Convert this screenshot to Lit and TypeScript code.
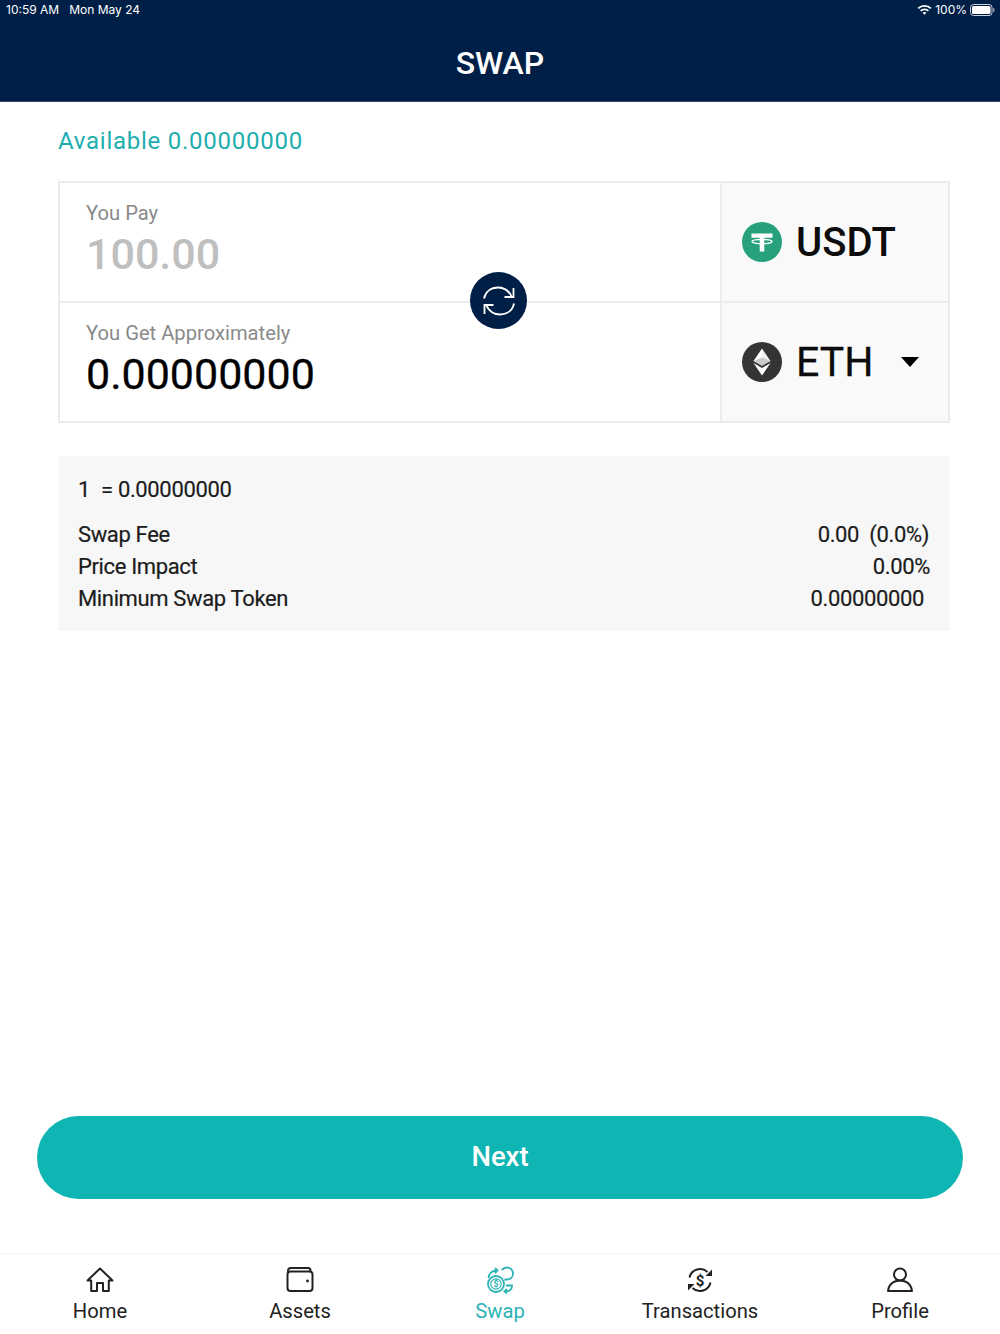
import {LitElement, html, css, svg} from 'lit';
import {customElement} from 'lit/decorators.js';

const tabs = [
  {
    label: 'Home',
    icon: svg`<path d="M1.500 14.500 14 2.500l12.500 12h-3.700V25h-5.800v-8h-6v8H5.200V14.500z" fill="none" stroke="currentColor" stroke-width="2" stroke-linejoin="round"/>`,
  },
  {
    label: 'Assets',
    icon: svg`<path d="M2 6.500V5a3 3 0 0 1 3-3h17a2.500 2.500 0 0 1 2.500 2.500V6" fill="none" stroke="currentColor" stroke-width="2"/><rect x="1.500" y="5.500" width="25" height="19.500" rx="3" fill="none" stroke="currentColor" stroke-width="2"/><circle cx="21.500" cy="15" r="1.400" fill="currentColor"/>`,
  },
  {
    label: 'Swap',
    active: true,
    icon: svg`<g fill="none" stroke="currentColor" stroke-width="1.800"><circle cx="10" cy="18" r="8"/><circle cx="10" cy="18" r="5.200" stroke-width="1.200"/><path d="M2.500 12C2.800 7.500 6 4.500 11 4.500M9 2 11.500 4.500 9 7"/><path d="M15.500 4c1.800-1.600 3.600-2.500 5.500-2.500 3.500 0 6 2.800 6 6 0 3.500-2.500 6-6 6h-2.500"/><path d="M20 19.500h6c0 3.500-2.500 6-7 6M21 23l-2.500 2.500 2.500 2"/></g><text x="10" y="21" text-anchor="middle" font-size="8.500" font-family="Roboto, sans-serif" font-weight="700" fill="currentColor">$</text>`,
  },
  {
    label: 'Transactions',
    icon: svg`<g fill="none" stroke="currentColor" stroke-width="2"><path d="M3.500 11.500A10.800 10.800 0 0 1 21.500 6M24.500 16.500A10.800 10.800 0 0 1 6.500 22"/></g><path d="M26 3.500v6.500h-6.500zM2 24.500V18h6.500z" fill="currentColor"/><text x="14" y="19.500" text-anchor="middle" font-size="15" font-family="Roboto, sans-serif" font-weight="700" fill="currentColor">$</text>`,
  },
  {
    label: 'Profile',
    icon: svg`<circle cx="14" cy="8.500" r="6" fill="none" stroke="currentColor" stroke-width="2"/><path d="M2 25c.6-6.500 5.500-10.500 12-10.500S25.400 18.500 26 25z" fill="none" stroke="currentColor" stroke-width="2" stroke-linejoin="round"/>`,
  },
];

@customElement('app-root')
export class AppRoot extends LitElement {
  static override styles = css`
    :host {
      display: block;
      font-family: Roboto, 'Liberation Sans', sans-serif;
      color: #111;
    }

    .page {
      display: flex;
      flex-direction: column;
      height: 1334px;
      background: #fff;
    }

    .header {
      display: flex;
      flex-direction: column;
      height: 102px;
      flex: none;
      box-sizing: border-box;
      background: #001f47;
      color: #fff;
      border-bottom: 1px solid #33496b;
    }

    .status {
      display: flex;
      align-items: center;
      height: 19px;
      padding: 0 5px 0 6px;
      font-family: Inter, 'Liberation Sans', sans-serif;
      font-size: 12px;
    }

    .status .date {
      margin-left: 10px;
    }

    .status .right {
      display: flex;
      align-items: center;
      margin-left: auto;
      gap: 3px;
    }

    .title {
      margin: 0;
      padding-top: 16px;
      text-align: center;
      font-size: 32px;
      line-height: 56px;
      font-weight: 500;
    }

    .content {
      flex: 1;
      display: flex;
      flex-direction: column;
      padding: 0 50px 0 58px;
    }

    .available {
      margin: 25px 0 26px 0;
      color: #1caeae;
      font-size: 24px;
      line-height: 28px;
      letter-spacing: 0.750px;
    }

    .swap-box {
      position: relative;
      display: grid;
      grid-template-columns: 660px 1fr;
      grid-template-rows: 118px 118px;
      gap: 2px 0;
      height: 242px;
      box-sizing: border-box;
      border: 2px solid #ececec;
      background: #ececec;
    }

    .field {
      background: #fff;
      padding: 18px 0 0 26px;
    }

    .field-label {
      font-size: 20.200px;
      line-height: 24px;
      color: #8a8a8a;
    }

    .field-value {
      margin-top: 3px;
      font-size: 43px;
      line-height: 52px;
      color: #000;
      -webkit-text-stroke: 0.3px #000;
    }

    .field-value.placeholder {
      color: #bfbfbf;
      font-weight: 500;
      -webkit-text-stroke: 0;
    }

    .token {
      display: flex;
      align-items: center;
      gap: 14px;
      margin-left: 2px;
      padding-left: 20px;
      background: #f9f9f9;
      font-size: 40px;
      font-weight: 500;
      color: #0c0c0c;
    }

    .token.plain {
      font-size: 41px;
      font-weight: 400;
      -webkit-text-stroke: 0.3px #0c0c0c;
    }

    .caret {
      margin-left: 14px;
      width: 0;
      height: 0;
      border-left: 9.500px solid transparent;
      border-right: 9.500px solid transparent;
      border-top: 10px solid #000;
    }

    .flip {
      position: absolute;
      left: 410px;
      top: 89px;
      display: flex;
      align-items: center;
      justify-content: center;
      width: 57px;
      height: 57px;
      border-radius: 50%;
      background: #001f47;
    }

    .info {
      margin-top: 33px;
      height: 175px;
      box-sizing: border-box;
      padding: 20px 20px 0;
      background: #f7f7f7;
      font-size: 22px;
      letter-spacing: -0.360px;
      color: #1c1c1c;
      -webkit-text-stroke: 0.2px #1c1c1c;
    }

    .rate {
      line-height: 27px;
      margin-bottom: 16px;
    }

    .rate .eq {
      margin-left: 6px;
    }

    .row {
      display: flex;
      justify-content: space-between;
      line-height: 32px;
    }

    .pad-1 {
      padding-right: 1px;
    }

    .pad-6 {
      padding-right: 6px;
    }

    .next {
      display: block;
      flex: none;
      width: 926px;
      height: 83px;
      margin: auto 0 54px -21px;
      padding: 0 0 2px;
      border: none;
      border-radius: 42px;
      background: #0fb5b3;
      color: #fff;
      font-family: inherit;
      font-size: 27.500px;
      font-weight: 500;
    }

    .tabs {
      display: grid;
      grid-template-columns: repeat(5, 1fr);
      flex: none;
      height: 81px;
      box-sizing: border-box;
      border-top: 1px solid #f4f4f4;
    }

    .tab {
      display: flex;
      flex-direction: column;
      align-items: center;
      padding-top: 12px;
      font-size: 20.200px;
      color: #222;
    }

    .tab svg {
      display: block;
      margin-bottom: 3px;
    }

    .tab span {
      line-height: 28px;
    }

    .tab.active {
      color: #2bb3b5;
    }
  `;

  override render() {
    return html`
      <div class="page">
        <header class="header">
          <div class="status">
            <span>10:59 AM</span>
            <span class="date">Mon May 24</span>
            <span class="right">
              <svg width="15" height="11" viewBox="0 0 15 11">
                <path d="M.5 3.800a10 10 0 0 1 14 0l-1.300 1.300a8.200 8.200 0 0 0-11.400 0zM3 6.300a6.500 6.500 0 0 1 9 0l-1.300 1.300a4.600 4.600 0 0 0-6.400 0zM5.500 8.800a3 3 0 0 1 4 0l-2 2z" fill="#fff"/>
              </svg>
              <span>100%</span>
              <svg width="25" height="12" viewBox="0 0 25 12">
                <rect x=".5" y=".5" width="21.500" height="11" rx="3" fill="none" stroke="#c9d0da"/>
                <rect x="2" y="2" width="18.500" height="8" rx="1.600" fill="#fff"/>
                <rect x="23" y="4" width="1.500" height="4" rx=".7" fill="#8a97ab"/>
              </svg>
            </span>
          </div>
          <h1 class="title">SWAP</h1>
        </header>
        <main class="content">
          <div class="available">Available 0.00000000</div>
          <section class="swap-box">
            <div class="field">
              <div class="field-label">You Pay</div>
              <div class="field-value placeholder">100.00</div>
            </div>
            <div class="token">${this.usdtIcon()}<span>USDT</span></div>
            <div class="field">
              <div class="field-label">You Get Approximately</div>
              <div class="field-value">0.00000000</div>
            </div>
            <div class="token plain">
              ${this.ethIcon()}<span>ETH</span><i class="caret"></i>
            </div>
            <div class="flip">
              <svg width="36" height="36" viewBox="0 0 36 36" fill="none" stroke="#fff" stroke-width="1.800">
                <path d="M3 15.500C4.500 8.500 10 4.500 17 4.500c6 0 10.500 3 13.500 8.500"/>
                <path d="M32.500 5v9h-9"/>
                <path d="M33 20.500C31.500 27.500 26 31.500 19 31.500c-6 0-10.500-3-13.500-8.500"/>
                <path d="M3.500 31v-9h9"/>
              </svg>
            </div>
          </section>
          <section class="info">
            <div class="rate">1 <span class="eq">= 0.00000000</span></div>
            <div class="row"><span>Swap Fee</span><span class="pad-1">0.00&nbsp; (0.0%)</span></div>
            <div class="row"><span>Price Impact</span><span>0.00%</span></div>
            <div class="row"><span>Minimum Swap Token</span><span class="pad-6">0.00000000</span></div>
          </section>
          <button class="next">Next</button>
        </main>
        <nav class="tabs">
          ${tabs.map(
            (t) => html`
              <div class="tab ${t.active ? 'active' : ''}">
                <svg width="28" height="28" viewBox="0 0 28 28">${t.icon}</svg>
                <span>${t.label}</span>
              </div>
            `
          )}
        </nav>
      </div>
    `;
  }

  private usdtIcon() {
    return html`
      <svg width="40" height="40" viewBox="0 0 40 40">
        <circle cx="20" cy="20" r="20" fill="#26a17b"/>
        <path d="M9.500 11.500h21v4.300h-8.200V29.500h-4.600V15.800H9.500z" fill="#fff"/>
        <ellipse cx="20" cy="19.500" rx="10" ry="2.200" fill="none" stroke="#fff" stroke-width="1.300"/>
      </svg>
    `;
  }

  private ethIcon() {
    return html`
      <svg width="40" height="40" viewBox="0 0 40 40">
        <circle cx="20" cy="20" r="20" fill="#343434"/>
        <path d="M20 6.500v15.500l-8.500-3z" fill="#fff"/>
        <path d="M20 6.500v15.500l8.500-3z" fill="#f0f0f0"/>
        <path d="M11.500 19 20 15.500 28.500 19 20 24z" fill="#c9c9c9"/>
        <path d="M11.500 21 20 26l8.500-5L20 33.500z" fill="#fff"/>
      </svg>
    `;
  }
}

declare global {
  interface HTMLElementTagNameMap {
    'app-root': AppRoot;
  }
}
